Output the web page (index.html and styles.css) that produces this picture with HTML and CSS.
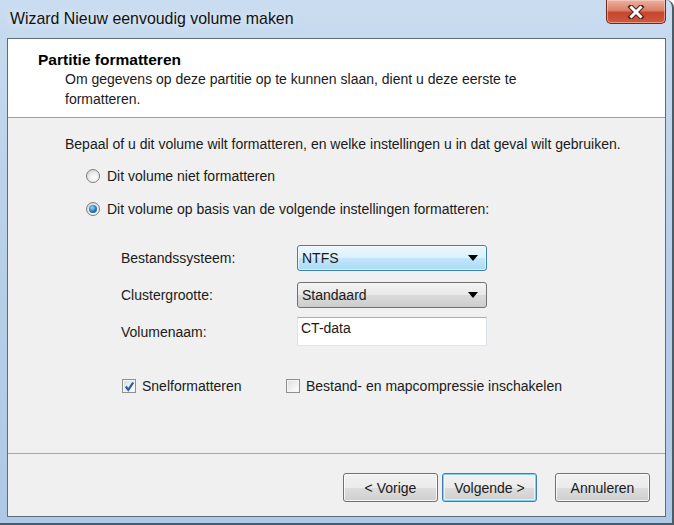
FILE: index.html
```html
<!DOCTYPE html>
<html lang="nl">
<head>
<meta charset="utf-8">
<title>Wizard Nieuw eenvoudig volume maken</title>
<link rel="stylesheet" href="styles.css">
</head>
<body>
<div class="window">
  <div class="titlebar">
    <span class="title">Wizard Nieuw eenvoudig volume maken</span>
    <div class="close" aria-label="Sluiten">
      <svg width="20" height="14" viewBox="0 0 20 14">
        <path d="M5 2 L15 12 M15 2 L5 12" stroke="#5a2018" stroke-width="5" stroke-linecap="square"/>
        <path d="M5.5 2.5 L14.5 11.5 M14.5 2.5 L5.5 11.5" stroke="#ffffff" stroke-width="3" stroke-linecap="square"/>
      </svg>
    </div>
  </div>
  <div class="client">
    <div class="header">
      <div class="h-title">Partitie formatteren</div>
      <div class="h-sub">Om gegevens op deze partitie op te kunnen slaan, dient u deze eerste te formatteren.</div>
    </div>
    <div class="body">
      <p class="intro">Bepaal of u dit volume wilt formatteren, en welke instellingen u in dat geval wilt gebruiken.</p>
      <div class="radio-row">
        <span class="radio"></span>
        <span>Dit volume niet formatteren</span>
      </div>
      <div class="radio-row">
        <span class="radio checked"></span>
        <span>Dit volume op basis van de volgende instellingen formatteren:</span>
      </div>
      <div class="form">
        <div class="field">
          <span class="label">Bestandssysteem:</span>
          <div class="combo active"><span>NTFS</span><span class="arrow"></span></div>
        </div>
        <div class="field">
          <span class="label">Clustergrootte:</span>
          <div class="combo"><span>Standaard</span><span class="arrow"></span></div>
        </div>
        <div class="field field-text">
          <span class="label">Volumenaam:</span>
          <div class="textbox">CT-data</div>
        </div>
      </div>
      <div class="checks">
        <div class="check-item first">
          <span class="checkbox checked">
            <svg width="11" height="11" viewBox="0 0 11 11"><path d="M1.8 5.5 L4.3 8.8 L9.2 1.5" fill="none" stroke="#2a58a8" stroke-width="2.2"/></svg>
          </span>
          <span>Snelformatteren</span>
        </div>
        <div class="check-item">
          <span class="checkbox"></span>
          <span>Bestand- en mapcompressie inschakelen</span>
        </div>
      </div>
    </div>
    <div class="footer">
      <button class="btn">&lt; Vorige</button>
      <button class="btn default">Volgende &gt;</button>
      <button class="btn cancel">Annuleren</button>
    </div>
  </div>
</div>
</body>
</html>
```
FILE: styles.css
```css
* { box-sizing: border-box; }
html, body { margin: 0; padding: 0; }
body {
  width: 674px;
  height: 525px;
  overflow: hidden;
  font-family: "Liberation Sans", Arial, sans-serif;
  font-size: 14px;
  color: #1a1a1a;
  background: #ffffff;
}
.window {
  width: 674px;
  height: 525px;
  background: linear-gradient(to bottom, #c9dcf0 0%, #b9d1ea 40%, #aec9e6 100%);
  border-right: 2px solid #4e5a66;
  border-bottom: 2px solid #4e5a66;
  border-top-right-radius: 8px;
  display: flex;
  flex-direction: column;
}
.titlebar {
  height: 38px;
  display: flex;
  align-items: flex-start;
  justify-content: space-between;
  padding-left: 10px;
  padding-right: 6px;
}
.title {
  font-size: 15.9px;
  color: #111;
  margin-top: 10px;
  text-shadow: 0 0 8px rgba(255,255,255,0.9);
}
.close {
  width: 60px;
  height: 24px;
  border: 1px solid #6b2a22;
  border-top: none;
  border-radius: 0 0 5px 5px;
  background: linear-gradient(to bottom, #eab2a2 0%, #dc7f68 45%, #c8442c 55%, #cc5a40 100%);
  box-shadow: inset 0 0 0 1px rgba(255,220,210,0.5);
  display: flex;
  align-items: center;
  justify-content: center;
}
.client {
  margin-left: 7px;
  width: 659px;
  height: 479px;
  border: 1px solid #5f6b78;
  background: #f0f0f0;
  display: flex;
  flex-direction: column;
}
.header {
  background: #ffffff;
  height: 79px;
  border-bottom: 1px solid #a0a0a0;
  padding: 12px 20px 0 30px;
}
.h-title {
  font-weight: bold;
  font-size: 15.5px;
  line-height: 18px;
  color: #000;
}
.h-sub {
  margin-left: 27px;
  line-height: 20px;
  width: 480px;
}
.body {
  flex: 1;
  padding-left: 57px;
  border-bottom: 1px solid #a8a8a8;
}
.intro {
  margin: 17px 0 0 0;
  line-height: 18px;
}
.radio-row {
  display: flex;
  align-items: center;
  gap: 7px;
  margin-left: 21px;
  margin-top: 13px;
  height: 20px;
}
.radio {
  width: 14px;
  height: 14px;
  border-radius: 50%;
  border: 1px solid #7e7e7e;
  background: radial-gradient(circle at 60% 65%, #ffffff 0%, #ececec 45%, #c4c4c4 100%);
  position: relative;
}
.radio.checked::after {
  content: "";
  position: absolute;
  left: 2px;
  top: 2px;
  width: 8px;
  height: 8px;
  border-radius: 50%;
  background: radial-gradient(circle at 40% 35%, #9cdcfb 0%, #2d86c8 45%, #0b3c7a 100%);
}
.form {
  margin-top: 26px;
  margin-left: 56px;
  display: flex;
  flex-direction: column;
}
.field {
  display: flex;
  align-items: center;
}
.field + .field { margin-top: 11px; }
.field.field-text { margin-top: 9px; }
.label {
  width: 176px;
}
.combo {
  width: 190px;
  height: 26px;
  border: 1px solid #707070;
  border-radius: 3px;
  background: linear-gradient(to bottom, #f4f4f4 0%, #e8e8e8 50%, #dadada 52%, #cdcdcd 100%);
  display: flex;
  align-items: center;
  justify-content: space-between;
  padding: 0 8px 0 4px;
}
.combo.active {
  border-color: #3c7fb1;
  background: linear-gradient(to bottom, #ecf7fd 0%, #dbf0fc 50%, #c2e6fb 52%, #a9dbf6 100%);
  box-shadow: inset 0 0 0 1px rgba(255,255,255,0.6);
}
.arrow {
  width: 0;
  height: 0;
  border-left: 5px solid transparent;
  border-right: 5px solid transparent;
  border-top: 6px solid #000;
}
.textbox {
  width: 190px;
  height: 29px;
  background: #fff;
  border: 1px solid #dde3ea;
  border-top-color: #abadb3;
  padding: 2px 3px;
}
.checks {
  margin-top: 32px;
  margin-left: 57px;
  display: flex;
  align-items: center;
}
.check-item {
  display: flex;
  align-items: center;
  gap: 6px;
}
.check-item.first { width: 164px; }
.checkbox {
  width: 14px;
  height: 14px;
  border: 1px solid #8e8f8f;
  background: linear-gradient(135deg, #dcdcdc 0%, #f2f2f2 60%, #ffffff 100%);
  box-shadow: inset 0 0 0 1px #f4f4f4;
  display: flex;
  align-items: center;
  justify-content: center;
}
.checkbox.checked { background: linear-gradient(135deg, #d4dbe6 0%, #eef2f8 60%, #fff 100%); }
.footer {
  height: 62px;
  display: flex;
  align-items: flex-start;
  padding-top: 19px;
  padding-left: 335px;
}
.btn {
  width: 95px;
  height: 29px;
  font-family: inherit;
  font-size: 14px;
  color: #1a1a1a;
  border: 1px solid #707070;
  border-radius: 3px;
  background: linear-gradient(to bottom, #f2f2f2 0%, #ebebeb 50%, #dddddd 52%, #cfcfcf 100%);
  box-shadow: inset 0 0 0 1px rgba(255,255,255,0.8);
  margin-right: 4px;
  padding: 0;
}
.btn.default {
  border-color: #3c7fb1;
  box-shadow: inset 0 0 0 1px #7fd0f5, inset 0 0 0 2px rgba(255,255,255,0.6);
}
.btn.cancel { margin-left: 14px; }
```
